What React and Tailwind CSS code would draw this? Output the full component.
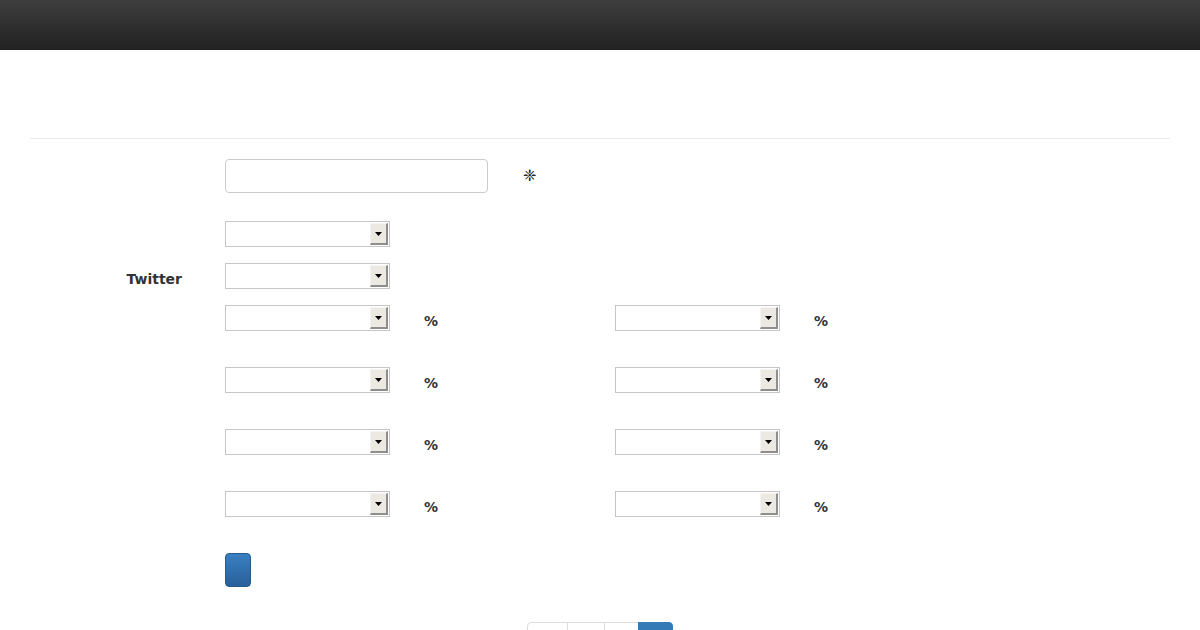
import React from "react";

function FakeSelect() {
  return (
    <div className="flex h-[26px] w-[165px] items-stretch justify-end border border-[#c6c6c6] bg-white p-[1px]">
      <div className="flex w-[18px] items-center justify-center border-t border-l border-t-[#f4f4f4] border-l-[#f4f4f4] border-r-2 border-b-2 border-r-[#8e8e8e] border-b-[#8e8e8e] bg-[#ece9e2]">
        <svg width="7" height="4" viewBox="0 0 7 4">
          <path d="M0 0h7L3.5 4z" fill="#000" />
        </svg>
      </div>
    </div>
  );
}

function PercentPair() {
  return (
    <div className="flex h-[26px] items-start">
      <FakeSelect />
      <span className="ml-[34px] h-[26px] pt-[7px] text-[14px] font-bold leading-[19px] text-[#333]">%</span>
    </div>
  );
}

function Row({ label, children, className = "" }) {
  return (
    <div className={`flex ${className}`}>
      <div className="w-[152px] shrink-0 text-right text-[14px] font-bold text-[#333]">{label}</div>
      <div className="ml-[43px]">{children}</div>
    </div>
  );
}

export default function App() {
  return (
    <div className="min-h-[630px] bg-white font-['DejaVu_Sans',sans-serif] text-[#333]">
      <div className="h-[50px] bg-gradient-to-b from-[#3e3e3e] to-[#222222]" />

      <div className="px-[30px]">
        <div className="h-[89px] border-b border-[#eaeaea]" />

        <Row className="mt-[20px] items-center">
          <div className="flex items-center">
            <div className="h-[34px] w-[263px] rounded-[4px] border border-[#cccccc] bg-white" />
            <span className="ml-[35px] text-[16px] font-bold leading-none text-[#222]">❈</span>
          </div>
        </Row>

        <Row className="mt-[28px]">
          <FakeSelect />
        </Row>

        <div className="mt-[16px] flex h-[26px] items-start">
          <div className="h-[26px] w-[152px] shrink-0 pt-[7px] text-right text-[14px] font-bold leading-[19px] text-[#333]">
            Twitter
          </div>
          <div className="ml-[43px]">
            <FakeSelect />
          </div>
        </div>

        <div className="mt-[16px] flex flex-col gap-[36px]">
          {[0, 1, 2, 3].map((i) => (
            <Row key={i}>
              <div className="flex gap-[177px]">
                <PercentPair />
                <PercentPair />
              </div>
            </Row>
          ))}
        </div>

        <Row className="mt-[36px]">
          <button className="block h-[34px] w-[26px] rounded-[4px] border border-[#265a88] bg-gradient-to-b from-[#3a7fc1] to-[#28609a]" />
        </Row>

        <div className="mt-[35px] flex justify-center">
          <div className="flex h-[34px] text-[14px]">
            <span className="w-[41px] rounded-tl-[4px] border border-[#dddddd] bg-white" />
            <span className="ml-[-1px] w-[38px] border border-[#dddddd] bg-white" />
            <span className="ml-[-1px] w-[35px] border border-[#dddddd] bg-white" />
            <span className="ml-[-1px] w-[35px] rounded-tr-[4px] border border-[#337ab7] bg-[#337ab7]" />
          </div>
        </div>
      </div>
    </div>
  );
}
